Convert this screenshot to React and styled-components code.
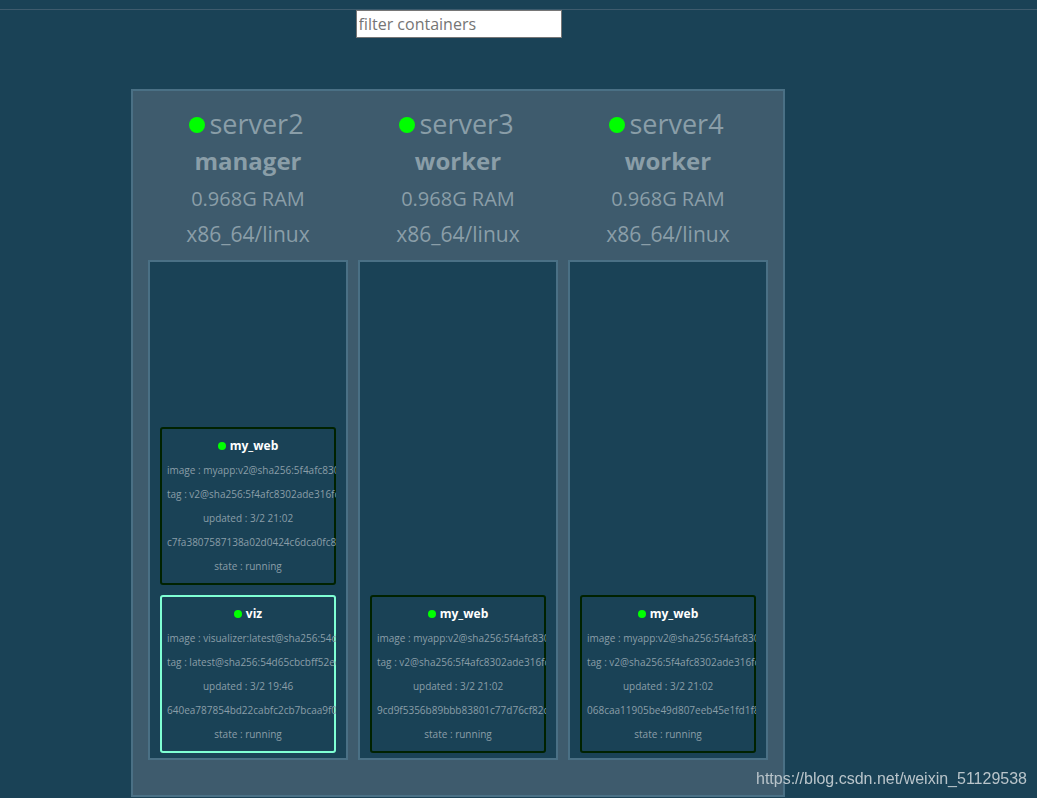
import React from "react";
import styled, { createGlobalStyle } from "styled-components";

const GlobalStyle = createGlobalStyle`
  *, *::before, *::after { box-sizing: border-box; }
  body {
    margin: 0;
    background: #1a4256;
    color: #8a9ea8;
    font-family: "Open Sans", "Noto Sans", sans-serif;
  }
`;

const Page = styled.div`
  padding-top: 9px;
`;

const TopBar = styled.header`
  border-top: 1px solid #3e5b6d;
  padding-right: 120px;
  display: flex;
  justify-content: center;
`;

const FilterInput = styled.input`
  width: 206px;
  height: 28px;
  padding: 1px 2px;
  border: 1px solid #767676;
  border-radius: 0;
  background: #fff;
  color: #222;
  font: 16px "Open Sans", "Noto Sans", sans-serif;
  &::placeholder { color: #757575; opacity: 1; }
`;

const Main = styled.main`
  display: flex;
  justify-content: center;
  padding: 51px 121px 1px 0;
`;

const Cluster = styled.div`
  display: flex;
  gap: 10px;
  padding: 15px 15px 35px;
  border: 2px solid #4a7085;
  background: #3e5b6d;
`;

const Node = styled.section`
  width: 200px;
  text-align: center;
`;

const NodeHeader = styled.div`
  height: 154px;
`;

const NodeName = styled.div`
  display: flex;
  justify-content: center;
  gap: 4px;
  height: 36px;
  padding-right: 3px;
  font-size: 27px;
  line-height: 36px;
`;

const Dot = styled.span`
  flex: none;
  width: 8px;
  height: 8px;
  border-radius: 50%;
  background: #00ff00;
`;

const NodeDot = styled(Dot)`
  width: 16px;
  height: 16px;
  margin-top: 11px;
`;

const NodeRole = styled.div`
  font-size: 24px;
  font-weight: 700;
  line-height: 38px;
`;

const NodeMemory = styled.div`
  font-size: 20px;
  line-height: 38px;
`;

const NodePlatform = styled.div`
  font-size: 21px;
  line-height: 32px;
`;

const TaskColumn = styled.div`
  display: flex;
  flex-direction: column;
  justify-content: flex-end;
  gap: 10px;
  min-height: 500px;
  padding: 10px 10px 5px;
  border: 2px solid #4a7085;
  background: #1a4256;
`;

const TaskCard = styled.article`
  width: 176px;
  padding: 7px;
  border-radius: 3px;
  box-shadow: inset 0 0 0 2px ${(p) => p.$color};
  overflow: hidden;
  font-size: 10px;
  line-height: 24px;
`;

const TaskName = styled.div`
  display: flex;
  align-items: center;
  justify-content: center;
  gap: 4px;
  color: #fff;
  font-size: 12px;
  font-weight: 700;
`;

const TaskLine = styled.div`
  white-space: nowrap;
`;

const Watermark = styled.a`
  position: fixed;
  right: 10px;
  bottom: 8px;
  color: #b9c4ca;
  font: 16px/22px "Liberation Sans", Arial, sans-serif;
  text-decoration: none;
`;

const webTask = (id) => ({
  name: "my_web",
  color: "#002200",
  lines: [
    "image : myapp:v2@sha256:5f4afc8302ade316fc",
    "tag : v2@sha256:5f4afc8302ade316fc47c99ee1",
    "updated : 3/2 21:02",
    id,
    "state : running",
  ],
});

const vizTask = {
  name: "viz",
  color: "#7fffd4",
  lines: [
    "image : visualizer:latest@sha256:54d65cbcbff52ee7",
    "tag : latest@sha256:54d65cbcbff52ee7d789cd285f",
    "updated : 3/2 19:46",
    "640ea787854bd22cabfc2cb7bcaa9f0a4e71",
    "state : running",
  ],
};

const nodes = [
  { name: "server2", role: "manager", tasks: [webTask("c7fa3807587138a02d0424c6dca0fc8b1e52"), vizTask] },
  { name: "server3", role: "worker", tasks: [webTask("9cd9f5356b89bbb83801c77d76cf82c40d3a")] },
  { name: "server4", role: "worker", tasks: [webTask("068caa11905be49d807eeb45e1fd1f8c72b6")] },
];

export default function App() {
  return (
    <>
      <GlobalStyle />
      <Page>
        <TopBar>
          <FilterInput type="text" placeholder="filter containers" aria-label="filter containers" />
        </TopBar>
        <Main>
          <Cluster>
            {nodes.map((node) => (
              <Node key={node.name}>
                <NodeHeader>
                  <NodeName>
                    <NodeDot />
                    <span>{node.name}</span>
                  </NodeName>
                  <NodeRole>{node.role}</NodeRole>
                  <NodeMemory>0.968G RAM</NodeMemory>
                  <NodePlatform>x86_64/linux</NodePlatform>
                </NodeHeader>
                <TaskColumn>
                  {node.tasks.map((task) => (
                    <TaskCard key={task.name} $color={task.color}>
                      <TaskName>
                        <Dot />
                        <span>{task.name}</span>
                      </TaskName>
                      {task.lines.map((line) => (
                        <TaskLine key={line}>{line}</TaskLine>
                      ))}
                    </TaskCard>
                  ))}
                </TaskColumn>
              </Node>
            ))}
          </Cluster>
        </Main>
      </Page>
      <Watermark href="https://blog.csdn.net/weixin_51129538">https://blog.csdn.net/weixin_51129538</Watermark>
    </>
  );
}
